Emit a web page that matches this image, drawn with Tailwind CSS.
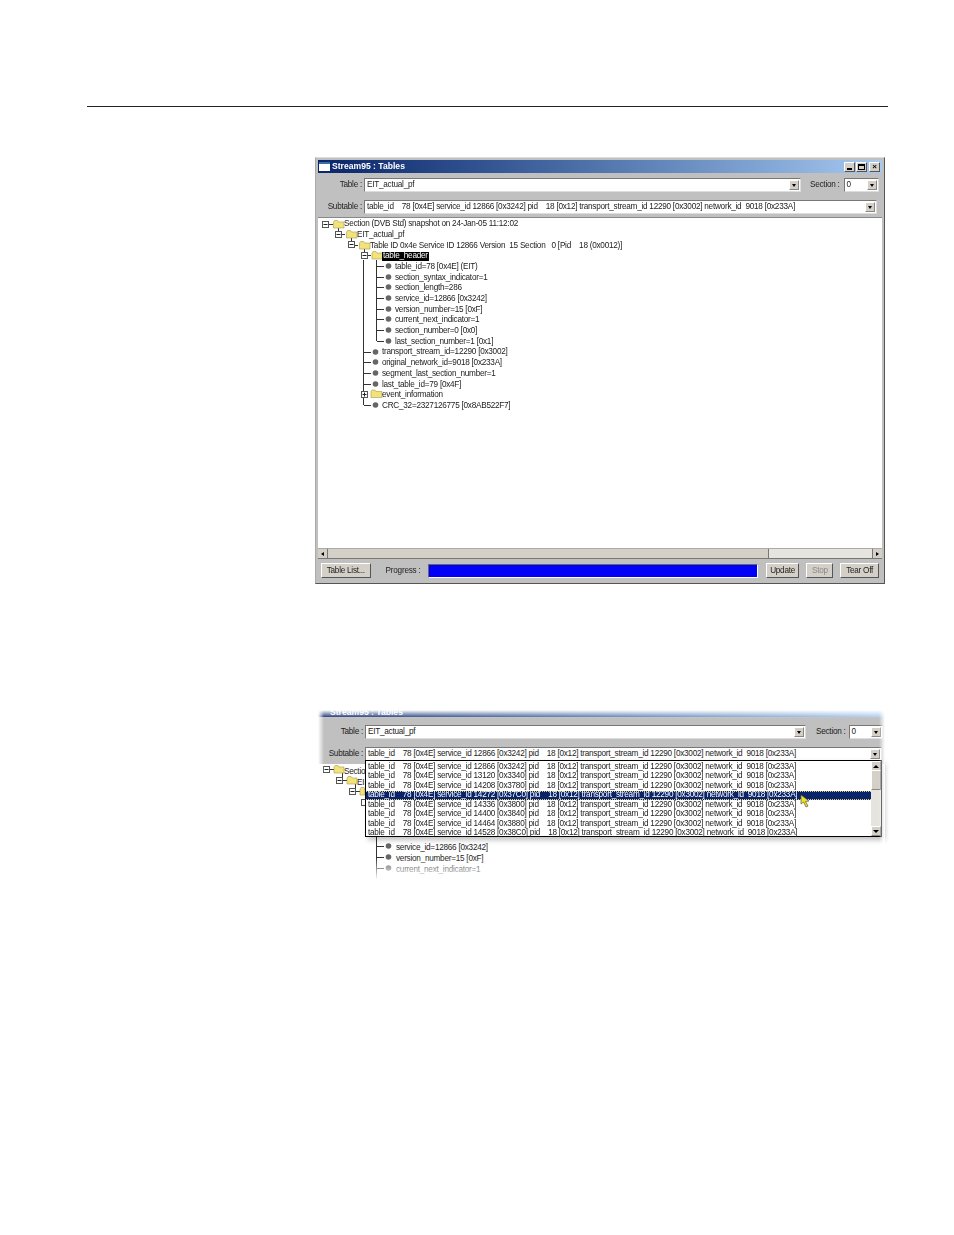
<!DOCTYPE html>
<html><head><meta charset="utf-8"><title>Stream95 Tables</title>
<script src="https://cdn.jsdelivr.net/npm/@tailwindcss/browser@4"></script></head>
<body class="bg-white font-['Liberation_Sans',Arial,sans-serif]">
<div class="w-[954px] h-[1235px] overflow-hidden bg-white pt-[106px] text-[8.2px] tracking-[-0.25px] text-[#222] [&_span]:whitespace-pre leading-none">
<div class="ml-[87px] w-[801px] h-px bg-[#222]"></div>

<!-- Window 1 -->
<div class="ml-[315px] mt-[50px] w-[570px] h-[427px] bg-[#c0c0c0] border border-t-[#ddd] border-l-[#aaa] border-r-[#555] border-b-[#555] flex flex-col p-[2px] pb-[1px] blur-[0.25px]">
  <div class="h-[13px] flex items-center bg-gradient-to-r from-[#0a246a] to-[#a6caf0] pl-[1px] pr-[2px]">
    <div class="w-[11px] h-[9px] bg-white border-t-2 border-[#3a6ea5] mr-[2px]"></div>
    <span class="text-white font-bold text-[8.6px] tracking-normal">Stream95 : Tables</span>
    <div class="ml-auto flex">
      <div class="w-[11px] h-[10px] bg-[#d4d0c8] border border-[#555] border-t-white border-l-white flex items-end justify-center pb-[1px]"><div class="w-[5px] h-[2px] bg-black"></div></div>
      <div class="w-[11px] h-[10px] ml-px bg-[#d4d0c8] border border-[#555] border-t-white border-l-white flex items-center justify-center"><div class="w-[7px] h-[6px] border border-black border-t-2"></div></div>
      <div class="w-[11px] h-[10px] ml-[2px] bg-[#d4d0c8] border border-[#555] border-t-white border-l-white flex items-center justify-center text-[8px] font-bold text-black">×</div>
    </div>
  </div>
  <!-- Table row -->
  <div class="h-[14px] mt-[5px] flex items-center">
    <span class="w-[44px] text-right">Table :</span>
    <div class="ml-[2px] w-[437px] h-[14px] bg-white border border-[#777] border-b-[#ddd] border-r-[#ddd] flex items-center pl-[2px] pr-px"><span>EIT_actual_pf</span>
      <div class="ml-auto w-[10px] h-[10px] bg-[#d4d0c8] border border-[#888] border-t-white border-l-white flex items-center justify-center"><div class="border-x-[2px] border-t-[3px] border-x-transparent border-t-black"></div></div></div>
    <span class="ml-[9px]">Section :</span>
    <div class="ml-[4px] w-[35px] h-[14px] bg-white border border-[#777] border-b-[#ddd] border-r-[#ddd] flex items-center pl-[2px] pr-px"><span>0</span>
      <div class="ml-auto w-[10px] h-[10px] bg-[#d4d0c8] border border-[#888] border-t-white border-l-white flex items-center justify-center"><div class="border-x-[2px] border-t-[3px] border-x-transparent border-t-black"></div></div></div>
  </div>
  <!-- Subtable row -->
  <div class="h-[14px] mt-[8px] flex items-center">
    <span class="w-[44px] text-right">Subtable :</span>
    <div class="ml-[2px] w-[513px] h-[14px] bg-white border border-[#777] border-b-[#ddd] border-r-[#ddd] flex items-center pl-[2px] pr-px"><span>table_id    78 [0x4E] service_id 12866 [0x3242] pid    18 [0x12] transport_stream_id 12290 [0x3002] network_id  9018 [0x233A]</span>
      <div class="ml-auto w-[10px] h-[10px] bg-[#d4d0c8] border border-[#888] border-t-white border-l-white flex items-center justify-center"><div class="border-x-[2px] border-t-[3px] border-x-transparent border-t-black"></div></div></div>
  </div>
  <!-- Tree -->
  <div class="relative mt-[3px] h-[331px] bg-white border-t border-[#888]">
    <svg class="absolute left-0 top-0" width="566" height="200" viewBox="318 218 566 200" fill="none">
      <g stroke="#333" stroke-width="1" shape-rendering="crispEdges">
        <path d="M325.5 224H333M338.5 224V235M338.5 234H345M351.5 234V245M351.5 245H358M364.5 245V255M364.5 255H371"/>
        <path d="M363.5 260V405M363.5 352H371M363.5 362H371M363.5 373H371M363.5 384H371M363.5 405H371"/>
        <path d="M376.5 260V341M376.5 266H384M376.5 277H384M376.5 287H384M376.5 298H384M376.5 309H384M376.5 319H384M376.5 330H384M376.5 341H384"/>
      </g>
      <g fill="#fff" stroke="#555" shape-rendering="crispEdges">
        <rect x="322.5" y="221.5" width="6" height="6"/><rect x="335.5" y="231.5" width="6" height="6"/><rect x="348.5" y="241.5" width="6" height="6"/><rect x="361.5" y="252.5" width="6" height="6"/><rect x="361.5" y="391.5" width="6" height="6"/>
      </g>
      <path stroke="#222" d="M323.5 224.5h4M336.5 234.5h4M349.5 244.5h4M362.5 255.5h4M362.5 394.5h4M364.5 392.5v4"/>
      <g fill="#f2e27a" stroke="#a89a50" stroke-width="0.6">
        <path d="M333.5 222l1-1.500h3l1 1.500h5.500v6h-10.500z"/><path d="M346.5 232l1-1.500h3l1 1.500h5.500v6h-10.500z"/><path d="M359.500 243l1-1.500h3l1 1.500h5.500v6h-10.500z"/><path d="M372 253l1-1.500h3l1 1.500h5.500v6h-10.500z"/><path d="M371 391.500l1-1.500h3l1 1.500h6v6h-11z"/>
      </g>
      <g fill="#666">
        <circle cx="388.500" cy="266" r="2.800"/><circle cx="388.500" cy="277" r="2.800"/><circle cx="388.500" cy="287" r="2.800"/><circle cx="388.500" cy="298" r="2.800"/><circle cx="388.500" cy="309" r="2.800"/><circle cx="388.500" cy="319" r="2.800"/><circle cx="388.500" cy="330" r="2.800"/><circle cx="388.500" cy="341" r="2.800"/>
        <circle cx="375.500" cy="352" r="2.800"/><circle cx="375.500" cy="362" r="2.800"/><circle cx="375.500" cy="373" r="2.800"/><circle cx="375.500" cy="384" r="2.800"/><circle cx="375.500" cy="405" r="2.800"/>
      </g>
    </svg>
    <div class="relative pt-[1px] [&>div]:h-[10.7px] [&>div]:flex [&>div]:items-center">
      <div class="pl-[26px]"><span>Section (DVB Std) snapshot on 24-Jan-05 11:12:02</span></div>
      <div class="pl-[39px]"><span>EIT_actual_pf</span></div>
      <div class="pl-[52px]"><span>Table ID 0x4e Service ID 12866 Version  15 Section   0 [Pid    18 (0x0012)]</span></div>
      <div class="pl-[64px]"><span class="bg-black text-white px-px">table_header</span></div>
      <div class="pl-[77px]"><span>table_id=78 [0x4E] (EIT)</span></div>
      <div class="pl-[77px]"><span>section_syntax_indicator=1</span></div>
      <div class="pl-[77px]"><span>section_length=286</span></div>
      <div class="pl-[77px]"><span>service_id=12866 [0x3242]</span></div>
      <div class="pl-[77px]"><span>version_number=15 [0xF]</span></div>
      <div class="pl-[77px]"><span>current_next_indicator=1</span></div>
      <div class="pl-[77px]"><span>section_number=0 [0x0]</span></div>
      <div class="pl-[77px]"><span>last_section_number=1 [0x1]</span></div>
      <div class="pl-[64px]"><span>transport_stream_id=12290 [0x3002]</span></div>
      <div class="pl-[64px]"><span>original_network_id=9018 [0x233A]</span></div>
      <div class="pl-[64px]"><span>segment_last_section_number=1</span></div>
      <div class="pl-[64px]"><span>last_table_id=79 [0x4F]</span></div>
      <div class="pl-[64px]"><span>event_information</span></div>
      <div class="pl-[64px]"><span>CRC_32=2327126775 [0x8AB522F7]</span></div>
    </div>
  </div>
  <!-- Scrollbar -->
  <div class="h-[11px] flex bg-[#d4d0c8] border-y border-[#aaa] border-b-[#777]">
    <div class="w-[10px] border-r border-[#777] flex items-center justify-center"><div class="border-y-[2px] border-r-[3px] border-y-transparent border-r-black"></div></div>
    <div class="w-[440px] border-r border-[#777] ml-px"></div>
    <div class="flex-1 bg-[#e6e4de]"></div>
    <div class="w-[10px] border-l border-[#777] flex items-center justify-center"><div class="border-y-[2px] border-l-[3px] border-y-transparent border-l-black"></div></div>
  </div>
  <!-- Bottom bar -->
  <div class="flex-1 flex items-center pl-[3px] pr-[3px]">
    <div class="w-[50px] h-[15px] pt-px flex items-center justify-center bg-[#d4d0c8] border border-white border-r-[#555] border-b-[#555]">Table List...</div>
    <span class="ml-[15px] pt-px">Progress :</span>
    <div class="ml-[8px] w-[332px] h-[14px] bg-[#0000f8] border border-[#666] border-r-white border-b-white"></div>
    <div class="ml-[8px] w-[34px] h-[15px] pt-px flex items-center justify-center bg-[#d4d0c8] border border-white border-r-[#555] border-b-[#555]">Update</div>
    <div class="ml-[7px] w-[27px] h-[15px] pt-px flex items-center justify-center bg-[#d4d0c8] text-[#888] border border-white border-r-[#555] border-b-[#555]">Stop</div>
    <div class="ml-[7px] w-[39px] h-[15px] pt-px flex items-center justify-center bg-[#d4d0c8] border border-white border-r-[#555] border-b-[#555]">Tear Off</div>
  </div>
</div>

<!-- Window 2 -->
<div class="relative ml-[318px] mt-[126px] w-[567px] h-[170px] bg-[#c0c0c0] flex flex-col blur-[0.3px]">
  <div class="h-[7px] flex items-end bg-gradient-to-r from-[#0a246a] to-[#a6caf0] pl-[12px] overflow-hidden">
    <span class="text-white font-bold text-[8.6px] tracking-normal">Stream95 : Tables</span>
  </div>
  <div class="h-[14px] mt-[8px] flex items-center">
    <span class="w-[45px] text-right">Table :</span>
    <div class="ml-[2px] w-[441px] h-[14px] bg-white border border-[#777] border-b-[#ddd] border-r-[#ddd] flex items-center pl-[2px] pr-px"><span>EIT_actual_pf</span>
      <div class="ml-auto w-[10px] h-[10px] bg-[#d4d0c8] border border-[#888] border-t-white border-l-white flex items-center justify-center"><div class="border-x-[2px] border-t-[3px] border-x-transparent border-t-black"></div></div></div>
    <span class="ml-[10px]">Section :</span>
    <div class="ml-[3px] w-[34px] h-[14px] bg-white border border-[#777] border-b-[#ddd] border-r-[#ddd] flex items-center pl-[2px] pr-px"><span>0</span>
      <div class="ml-auto w-[10px] h-[10px] bg-[#d4d0c8] border border-[#888] border-t-white border-l-white flex items-center justify-center"><div class="border-x-[2px] border-t-[3px] border-x-transparent border-t-black"></div></div></div>
  </div>
  <div class="h-[14px] mt-[8px] flex items-center">
    <span class="w-[45px] text-right">Subtable :</span>
    <div class="ml-[2px] w-[517px] h-[14px] bg-white border border-[#777] border-b-[#ddd] border-r-[#ddd] flex items-center pl-[2px] pr-px"><span>table_id    78 [0x4E] service_id 12866 [0x3242] pid    18 [0x12] transport_stream_id 12290 [0x3002] network_id  9018 [0x233A]</span>
      <div class="ml-auto w-[10px] h-[10px] bg-[#d4d0c8] border border-[#888] border-t-white border-l-white flex items-center justify-center"><div class="border-x-[2px] border-t-[3px] border-x-transparent border-t-black"></div></div></div>
  </div>
  <div class="relative flex-1 mt-[3px] bg-white">
    <svg class="absolute left-0 top-0" width="567" height="115" viewBox="318 765 567 115" fill="none">
      <g stroke="#333" shape-rendering="crispEdges">
        <path d="M330 770H338M342.500 770V781M342.500 781H350M355.500 781V792M355.500 792H365M376.500 838V880M376.500 847H384M376.500 858H384M376.500 869H384"/>
      </g>
      <g fill="#fff" stroke="#555" shape-rendering="crispEdges"><rect x="323.500" y="767.500" width="6" height="6"/><rect x="336.500" y="778.500" width="6" height="6"/><rect x="349.500" y="789.500" width="6" height="6"/><rect x="361.500" y="800.500" width="4" height="6"/></g>
      <path stroke="#222" d="M324.500 770.500h4M337.500 781.500h4M350.500 792.500h4"/>
      <g fill="#f2e27a" stroke="#a89a50" stroke-width="0.6"><path d="M334 768l1-1.500h3l1 1.500h5v6h-10z"/><path d="M347 779l1-1.500h3l1 1.500h5v6h-10z"/><path d="M360 790l1-1.500h3l1 1.500v6h-5z"/></g>
      <g fill="#666"><circle cx="388.500" cy="847" r="2.800"/><circle cx="388.500" cy="858" r="2.800"/><circle cx="388.500" cy="869" r="2.800"/></g>
    </svg>
    <div class="relative pt-[4px] pl-[26px] h-[14px] flex"><span>Section</span></div>
    <div class="relative pl-[39px] h-[11px] flex"><span class="pt-[1px]">EI</span></div>
    <!-- Tree rows below list -->
    <div class="absolute left-0 top-[79px] [&>div]:h-[11px] [&>div]:flex [&>div]:items-center">
      <div class="pl-[78px]"><span>service_id=12866 [0x3242]</span></div>
      <div class="pl-[78px]"><span>version_number=15 [0xF]</span></div>
      <div class="pl-[78px]"><span>current_next_indicator=1</span></div>
    </div>
    <!-- Dropdown list -->
    <div class="absolute left-[47px] -top-[4px] w-[517px] h-[77px] bg-white border border-black shadow-[3px_3px_5px_rgba(0,0,0,0.25)] flex">
      <div class="flex-1 [&>div]:h-[9.5px] [&>div]:flex [&>div]:items-center [&>div]:pl-[2px] pt-px">
        <div><span>table_id    78 [0x4E] service_id 12866 [0x3242] pid    18 [0x12] transport_stream_id 12290 [0x3002] network_id  9018 [0x233A]</span></div>
        <div><span>table_id    78 [0x4E] service_id 13120 [0x3340] pid    18 [0x12] transport_stream_id 12290 [0x3002] network_id  9018 [0x233A]</span></div>
        <div><span>table_id    78 [0x4E] service_id 14208 [0x3780] pid    18 [0x12] transport_stream_id 12290 [0x3002] network_id  9018 [0x233A]</span></div>
        <div class="bg-[#0a246a] text-white border-y border-dotted border-[#e8d070]"><span>table_id    78 [0x4E] service_id 14272 [0x37C0] pid    18 [0x12] transport_stream_id 12290 [0x3002] network_id  9018 [0x233A]</span></div>
        <div><span>table_id    78 [0x4E] service_id 14336 [0x3800] pid    18 [0x12] transport_stream_id 12290 [0x3002] network_id  9018 [0x233A]</span></div>
        <div><span>table_id    78 [0x4E] service_id 14400 [0x3840] pid    18 [0x12] transport_stream_id 12290 [0x3002] network_id  9018 [0x233A]</span></div>
        <div><span>table_id    78 [0x4E] service_id 14464 [0x3880] pid    18 [0x12] transport_stream_id 12290 [0x3002] network_id  9018 [0x233A]</span></div>
        <div><span>table_id    78 [0x4E] service_id 14528 [0x38C0] pid    18 [0x12] transport_stream_id 12290 [0x3002] network_id  9018 [0x233A]</span></div>
      </div>
      <div class="w-[10px] bg-[#e6e4de] flex flex-col justify-between">
        <div class="h-[10px] bg-[#d4d0c8] border border-[#888] border-t-white border-l-white flex items-center justify-center"><div class="border-x-[3px] border-b-[3px] border-x-transparent border-b-black"></div></div>
        <div class="h-[20px] bg-[#d4d0c8] border border-[#888] border-t-white border-l-white -mt-[1px] mb-auto"></div>
        <div class="h-[10px] bg-[#d4d0c8] border border-[#888] border-t-white border-l-white flex items-center justify-center"><div class="border-x-[3px] border-t-[3px] border-x-transparent border-t-black"></div></div>
      </div>
    </div>
    <svg class="absolute left-[482px] top-[30px]" width="11" height="14" viewBox="0 0 11 14"><path d="M1 1l0 9 2.500-2 2.500 5 2-1-2.500-4.500 3.500-.5z" fill="#f0e020" stroke="#555" stroke-width="0.7"/></svg>
  </div>
  <!-- Feathered edges -->
  <div class="absolute left-0 top-0 w-full h-[8px] bg-gradient-to-b from-white to-white/0"></div>
  <div class="absolute left-0 bottom-0 w-full h-[22px] bg-gradient-to-t from-white to-white/0"></div>
  <div class="absolute left-0 top-0 h-full w-[6px] bg-gradient-to-r from-white to-white/0"></div>
  <div class="absolute right-0 top-0 h-full w-[6px] bg-gradient-to-l from-white to-white/0"></div>
</div>
</div>
</body></html>
